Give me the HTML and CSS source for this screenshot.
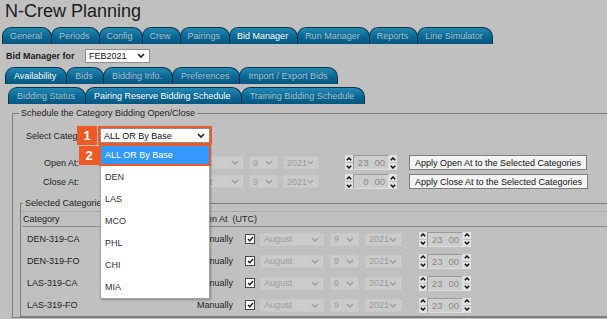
FILE: index.html
```html
<!DOCTYPE html>
<html>
<head>
    <title>N-Crew Planning</title>
    <meta name="viewport" content="width=device-width, initial-scale=1.0">
    <link rel="stylesheet" href="styles.css">
</head>
<body>
    <h1 class="app-title">N-Crew Planning</h1>

    <div class="tabs tabs-main">
        <a class="tab">General</a>
        <a class="tab">Periods</a>
        <a class="tab">Config</a>
        <a class="tab">Crew</a>
        <a class="tab">Pairings</a>
        <a class="tab active">Bid Manager</a>
        <a class="tab">Run Manager</a>
        <a class="tab">Reports</a>
        <a class="tab">Line Simulator</a>
    </div>

    <div class="manager-row">
        <label class="manager-label">Bid Manager for</label>
        <div class="sel sel-white sel-period">
            <span>FEB2021</span>
            <svg class="chev" width="8" height="5" viewBox="0 0 8 5"><path d="M1 1 L4 4 L7 1" /></svg>
        </div>
    </div>

    <div class="tabs tabs-sub">
        <a class="tab active">Availability</a>
        <a class="tab">Bids</a>
        <a class="tab">Bidding Info.</a>
        <a class="tab">Preferences</a>
        <a class="tab">Import / Export Bids</a>
    </div>

    <div class="tabs tabs-third">
        <a class="tab">Bidding Status</a>
        <a class="tab active">Pairing Reserve Bidding Schedule</a>
        <a class="tab">Training Bidding Schedule</a>
    </div>

    <fieldset class="schedule">
        <legend>Schedule the Category Bidding Open/Close</legend>

        <div class="form-row row-category">
            <label class="cat-label">Select Category:</label>
            <div class="cat-picker">
                <div class="sel sel-white sel-category">
                    <span>ALL OR By Base</span>
                    <svg class="chev" width="8" height="5" viewBox="0 0 8 5"><path d="M1 1 L4 4 L7 1" /></svg>
                </div>
                <span class="step step-1">1</span>
                <span class="step step-2">2</span>
                <ul class="dropdown">
                    <li class="picked">ALL OR By Base</li>
                    <li>DEN</li>
                    <li>LAS</li>
                    <li>MCO</li>
                    <li>PHL</li>
                    <li>CHI</li>
                    <li>MIA</li>
                </ul>
            </div>
        </div>

        <div class="form-row row-time">
            <label class="time-label">Open At:</label>
            <div class="sel sel-off sel-month lead"><span>August</span><svg class="chev" width="8" height="5" viewBox="0 0 8 5"><path d="M1 1 L4 4 L7 1" /></svg></div>
            <div class="sel sel-off sel-day"><span>9</span><svg class="chev" width="8" height="5" viewBox="0 0 8 5"><path d="M1 1 L4 4 L7 1" /></svg></div>
            <div class="sel sel-off sel-year"><span>2021</span><svg class="chev" width="8" height="5" viewBox="0 0 8 5"><path d="M1 1 L4 4 L7 1" /></svg></div>
            <div class="spin spin-top">
                <div class="spin-btns">
                    <span><svg width="6" height="4" viewBox="0 0 6 4"><path d="M0.8 3.2 L3 1 L5.2 3.2" /></svg></span>
                    <span><svg width="6" height="4" viewBox="0 0 6 4"><path d="M0.8 0.8 L3 3 L5.2 0.8" /></svg></span>
                </div>
                <div class="spin-val"><span>23</span><span>00</span></div>
                <div class="spin-btns">
                    <span><svg width="6" height="4" viewBox="0 0 6 4"><path d="M0.8 3.2 L3 1 L5.2 3.2" /></svg></span>
                    <span><svg width="6" height="4" viewBox="0 0 6 4"><path d="M0.8 0.8 L3 3 L5.2 0.8" /></svg></span>
                </div>
            </div>
            <button class="apply">Apply Open At to the Selected Categories</button>
        </div>

        <div class="form-row row-time">
            <label class="time-label">Close At:</label>
            <div class="sel sel-off sel-month lead"><span>August</span><svg class="chev" width="8" height="5" viewBox="0 0 8 5"><path d="M1 1 L4 4 L7 1" /></svg></div>
            <div class="sel sel-off sel-day"><span>9</span><svg class="chev" width="8" height="5" viewBox="0 0 8 5"><path d="M1 1 L4 4 L7 1" /></svg></div>
            <div class="sel sel-off sel-year"><span>2021</span><svg class="chev" width="8" height="5" viewBox="0 0 8 5"><path d="M1 1 L4 4 L7 1" /></svg></div>
            <div class="spin spin-top">
                <div class="spin-btns">
                    <span><svg width="6" height="4" viewBox="0 0 6 4"><path d="M0.8 3.2 L3 1 L5.2 3.2" /></svg></span>
                    <span><svg width="6" height="4" viewBox="0 0 6 4"><path d="M0.8 0.8 L3 3 L5.2 0.8" /></svg></span>
                </div>
                <div class="spin-val"><span>0</span><span>00</span></div>
                <div class="spin-btns">
                    <span><svg width="6" height="4" viewBox="0 0 6 4"><path d="M0.8 3.2 L3 1 L5.2 3.2" /></svg></span>
                    <span><svg width="6" height="4" viewBox="0 0 6 4"><path d="M0.8 0.8 L3 3 L5.2 0.8" /></svg></span>
                </div>
            </div>
            <button class="apply">Apply Close At to the Selected Categories</button>
        </div>

        <fieldset class="selected">
            <legend>Selected Categories</legend>
            <div class="grid-head">
                <span class="head-cat">Category</span>
                <span class="head-open">Open At &nbsp;(UTC)</span>
            </div>
            <div class="grid-body">
                <div class="grid-row">
                    <span class="cat-name">DEN-319-CA</span>
                    <span class="mode">Manually</span>
                    <span class="check"><svg width="7" height="6" viewBox="0 0 7 6"><path d="M1 3 L2.8 4.8 L6 1" /></svg></span>
                    <div class="sel sel-off sel-month"><span>August</span><svg class="chev" width="8" height="5" viewBox="0 0 8 5"><path d="M1 1 L4 4 L7 1" /></svg></div>
                    <div class="sel sel-off sel-day"><span>9</span><svg class="chev" width="8" height="5" viewBox="0 0 8 5"><path d="M1 1 L4 4 L7 1" /></svg></div>
                    <div class="sel sel-off sel-year"><span>2021</span><svg class="chev" width="8" height="5" viewBox="0 0 8 5"><path d="M1 1 L4 4 L7 1" /></svg></div>
                    <div class="spin spin-grid">
                        <div class="spin-btns">
                            <span><svg width="6" height="4" viewBox="0 0 6 4"><path d="M0.8 3.2 L3 1 L5.2 3.2" /></svg></span>
                            <span><svg width="6" height="4" viewBox="0 0 6 4"><path d="M0.8 0.8 L3 3 L5.2 0.8" /></svg></span>
                        </div>
                        <div class="spin-val"><span>23</span><span>00</span></div>
                        <div class="spin-btns">
                            <span><svg width="6" height="4" viewBox="0 0 6 4"><path d="M0.8 3.2 L3 1 L5.2 3.2" /></svg></span>
                            <span><svg width="6" height="4" viewBox="0 0 6 4"><path d="M0.8 0.8 L3 3 L5.2 0.8" /></svg></span>
                        </div>
                    </div>
                </div>
                <div class="grid-row">
                    <span class="cat-name">DEN-319-FO</span>
                    <span class="mode">Manually</span>
                    <span class="check"><svg width="7" height="6" viewBox="0 0 7 6"><path d="M1 3 L2.8 4.8 L6 1" /></svg></span>
                    <div class="sel sel-off sel-month"><span>August</span><svg class="chev" width="8" height="5" viewBox="0 0 8 5"><path d="M1 1 L4 4 L7 1" /></svg></div>
                    <div class="sel sel-off sel-day"><span>9</span><svg class="chev" width="8" height="5" viewBox="0 0 8 5"><path d="M1 1 L4 4 L7 1" /></svg></div>
                    <div class="sel sel-off sel-year"><span>2021</span><svg class="chev" width="8" height="5" viewBox="0 0 8 5"><path d="M1 1 L4 4 L7 1" /></svg></div>
                    <div class="spin spin-grid">
                        <div class="spin-btns">
                            <span><svg width="6" height="4" viewBox="0 0 6 4"><path d="M0.8 3.2 L3 1 L5.2 3.2" /></svg></span>
                            <span><svg width="6" height="4" viewBox="0 0 6 4"><path d="M0.8 0.8 L3 3 L5.2 0.8" /></svg></span>
                        </div>
                        <div class="spin-val"><span>23</span><span>00</span></div>
                        <div class="spin-btns">
                            <span><svg width="6" height="4" viewBox="0 0 6 4"><path d="M0.8 3.2 L3 1 L5.2 3.2" /></svg></span>
                            <span><svg width="6" height="4" viewBox="0 0 6 4"><path d="M0.8 0.8 L3 3 L5.2 0.8" /></svg></span>
                        </div>
                    </div>
                </div>
                <div class="grid-row">
                    <span class="cat-name">LAS-319-CA</span>
                    <span class="mode">Manually</span>
                    <span class="check"><svg width="7" height="6" viewBox="0 0 7 6"><path d="M1 3 L2.8 4.8 L6 1" /></svg></span>
                    <div class="sel sel-off sel-month"><span>August</span><svg class="chev" width="8" height="5" viewBox="0 0 8 5"><path d="M1 1 L4 4 L7 1" /></svg></div>
                    <div class="sel sel-off sel-day"><span>9</span><svg class="chev" width="8" height="5" viewBox="0 0 8 5"><path d="M1 1 L4 4 L7 1" /></svg></div>
                    <div class="sel sel-off sel-year"><span>2021</span><svg class="chev" width="8" height="5" viewBox="0 0 8 5"><path d="M1 1 L4 4 L7 1" /></svg></div>
                    <div class="spin spin-grid">
                        <div class="spin-btns">
                            <span><svg width="6" height="4" viewBox="0 0 6 4"><path d="M0.8 3.2 L3 1 L5.2 3.2" /></svg></span>
                            <span><svg width="6" height="4" viewBox="0 0 6 4"><path d="M0.8 0.8 L3 3 L5.2 0.8" /></svg></span>
                        </div>
                        <div class="spin-val"><span>23</span><span>00</span></div>
                        <div class="spin-btns">
                            <span><svg width="6" height="4" viewBox="0 0 6 4"><path d="M0.8 3.2 L3 1 L5.2 3.2" /></svg></span>
                            <span><svg width="6" height="4" viewBox="0 0 6 4"><path d="M0.8 0.8 L3 3 L5.2 0.8" /></svg></span>
                        </div>
                    </div>
                </div>
                <div class="grid-row">
                    <span class="cat-name">LAS-319-FO</span>
                    <span class="mode">Manually</span>
                    <span class="check"><svg width="7" height="6" viewBox="0 0 7 6"><path d="M1 3 L2.8 4.8 L6 1" /></svg></span>
                    <div class="sel sel-off sel-month"><span>August</span><svg class="chev" width="8" height="5" viewBox="0 0 8 5"><path d="M1 1 L4 4 L7 1" /></svg></div>
                    <div class="sel sel-off sel-day"><span>9</span><svg class="chev" width="8" height="5" viewBox="0 0 8 5"><path d="M1 1 L4 4 L7 1" /></svg></div>
                    <div class="sel sel-off sel-year"><span>2021</span><svg class="chev" width="8" height="5" viewBox="0 0 8 5"><path d="M1 1 L4 4 L7 1" /></svg></div>
                    <div class="spin spin-grid">
                        <div class="spin-btns">
                            <span><svg width="6" height="4" viewBox="0 0 6 4"><path d="M0.8 3.2 L3 1 L5.2 3.2" /></svg></span>
                            <span><svg width="6" height="4" viewBox="0 0 6 4"><path d="M0.8 0.8 L3 3 L5.2 0.8" /></svg></span>
                        </div>
                        <div class="spin-val"><span>23</span><span>00</span></div>
                        <div class="spin-btns">
                            <span><svg width="6" height="4" viewBox="0 0 6 4"><path d="M0.8 3.2 L3 1 L5.2 3.2" /></svg></span>
                            <span><svg width="6" height="4" viewBox="0 0 6 4"><path d="M0.8 0.8 L3 3 L5.2 0.8" /></svg></span>
                        </div>
                    </div>
                </div>
            </div>
        </fieldset>
    </fieldset>
</body>
</html>
```

FILE: styles.css
```css
* {
    box-sizing: border-box;
}

html, body {
    width: 100%;
    height: 100%;
    overflow: hidden;
}

body {
    margin: 0;
    background: #c0c0c0;
    font-family: "Liberation Sans", Arial, sans-serif;
    font-size: 9px;
    color: #1e1e1e;
}

.app-title {
    margin: 0 0 5px 0;
    padding-left: 5px;
    height: 22px;
    font-size: 18px;
    line-height: 22px;
    font-weight: normal;
    color: #1b1b1b;
}

/* tab strips */
.tabs {
    display: flex;
    height: 17px;
}

.tabs-main {
    padding-left: 2px;
}

.tabs-sub {
    padding-left: 5px;
}

.tabs-third {
    padding-left: 8px;
    margin-top: 3px;
}

.tab {
    position: relative;
    height: 17px;
    line-height: 16px;
    padding: 0 10px 0 8px;
    border: 1px solid #0c3247;
    border-bottom: 0;
    border-radius: 9px 10px 0 0;
    background: linear-gradient(#2488b5, #0a6793 55%, #045780);
    color: #a6bfcb;
    white-space: nowrap;
}

.tabs-main .tab {
    padding: 0 9px 0 7px;
}

.tab + .tab {
    margin-left: -1px;
}

.tab.active {
    color: #fff;
    z-index: 2;
}

.manager-row {
    display: flex;
    align-items: center;
    height: 23px;
    padding-left: 6px;
}

.manager-label {
    width: 79px;
    font-weight: bold;
    color: #1a1a1a;
}

/* select boxes */
.sel {
    display: flex;
    align-items: center;
    justify-content: space-between;
    height: 13px;
    padding: 0 4px 0 3px;
    white-space: nowrap;
}

.sel .chev path {
    fill: none;
    stroke-width: 1.3;
}

.sel-white {
    background: #fff;
    border: 1px solid #8f8f8f;
    color: #111;
}

.sel-white .chev path {
    stroke: #222;
    stroke-width: 1.7;
}

.sel-period {
    width: 65px;
    height: 14px;
}

.sel-category {
    width: 110px;
    height: 15px;
    outline: 2px solid #ee5a26;
}

.sel-off {
    background: #cbcbcb;
    border: 1px solid #c7c7c7;
    color: #9c9c9c;
}

.sel-off .chev path {
    stroke: #9c9c9c;
}

.sel-month {
    width: 64px;
}

.sel-day {
    width: 29px;
    margin-left: 5px;
}

.sel-year {
    width: 36px;
    margin-left: 5px;
}

/* schedule form */
.schedule {
    min-width: 0;
    width: 640px;
    margin: 4px 0 0 12px;
    padding: 0;
    border: 1px solid #7d7d7d;
}

.schedule > legend {
    margin-left: 6px;
    padding: 0 2px;
    line-height: 11px;
}

.form-row {
    display: flex;
    align-items: center;
    height: 15px;
}

.row-category {
    margin-top: 9px;
    padding-left: 13px;
}

.row-time {
    margin-top: 4px;
}

.row-category + .row-time {
    margin-top: 12px;
}

.cat-label {
    width: 74px;
    color: #222;
}

.cat-picker {
    position: relative;
    z-index: 5;
}

.step {
    position: absolute;
    width: 20px;
    height: 19px;
    background: #ee5a26;
    color: #fff;
    font-size: 13px;
    font-weight: bold;
    line-height: 19px;
    text-align: center;
}

.step-1 {
    left: -23px;
    top: -2px;
}

.step-2 {
    left: -21px;
    top: 18px;
    z-index: 2;
}

.dropdown {
    position: absolute;
    left: 0;
    top: 17px;
    width: 110px;
    margin: 0;
    padding: 0;
    list-style: none;
    background: #fff;
    border: 1px solid #a3a3a3;
    box-shadow: 1px 1px 2px rgba(0, 0, 0, 0.3);
}

.dropdown li {
    height: 22px;
    line-height: 22px;
    padding-left: 4px;
    color: #3a2a3a;
}

.dropdown li.picked {
    height: 18px;
    line-height: 18px;
    margin-bottom: 2px;
    background: #3399fb;
    color: #fff;
    outline: 2px solid #ee5a26;
}

.time-label {
    width: 66px;
    text-align: right;
    color: #222;
}

.lead {
    margin-left: 101px;
}

/* hour / minute spinner */
.spin {
    display: flex;
    align-items: center;
}

.spin-top {
    margin-left: 26px;
}

.spin-btns {
    display: flex;
    flex-direction: column;
    gap: 1px;
}

.spin-btns span {
    display: flex;
    align-items: center;
    justify-content: center;
    width: 8px;
    height: 7px;
    background: #e2e2e2;
}

.spin-btns path {
    fill: none;
    stroke: #111;
    stroke-width: 1.5;
}

.spin-val {
    display: flex;
    justify-content: flex-end;
    gap: 6px;
    width: 36px;
    height: 15px;
    padding-right: 3px;
    line-height: 13px;
    background: #cdcdcd;
    border: 1px solid;
    border-color: #9a9a9a #dedede #dedede #9a9a9a;
    color: #8a8a8a;
    font-size: 9.5px;
}

.apply {
    height: 15px;
    margin-left: 12px;
    padding: 0 5px;
    background: #f4f4f4;
    border: 1px solid #7c7c7c;
    border-radius: 0;
    font-family: inherit;
    font-size: 9px;
    color: #111;
    line-height: 12px;
}

/* selected categories grid */
.selected {
    min-width: 0;
    width: 620px;
    margin: 9px 0 0 7px;
    padding: 0;
    border: 1px solid #7d7d7d;
}

.selected > legend {
    margin-left: 2px;
    padding: 0 2px;
    line-height: 11px;
}

.grid-head {
    display: flex;
    align-items: center;
    height: 16px;
    margin: 2px 0 0 1px;
    border-top: 1px solid #a8a8a8;
    border-bottom: 1px solid #8a8a8a;
    color: #222;
}

.head-cat {
    width: 173px;
    padding-left: 1px;
}

.grid-body {
    padding-top: 1px;
    margin-left: 1px;
}

.grid-row {
    display: flex;
    align-items: center;
    height: 22px;
}

.cat-name {
    width: 155px;
    padding-left: 5px;
    color: #1e1e1e;
}

.mode {
    width: 56px;
    text-align: right;
    color: #1e1e1e;
}

.check {
    display: flex;
    align-items: center;
    justify-content: center;
    width: 10px;
    height: 10px;
    margin: 0 5px 0 12px;
    background: #fbfbfb;
    border: 1px solid #4a4a4a;
}

.check path {
    fill: none;
    stroke: #111;
    stroke-width: 1.3;
}

.grid-row .sel-day,
.grid-row .sel-year {
    margin-left: 6px;
}

.grid-row .sel-year {
    width: 37px;
}

.spin-grid {
    margin-left: 17px;
}
```
